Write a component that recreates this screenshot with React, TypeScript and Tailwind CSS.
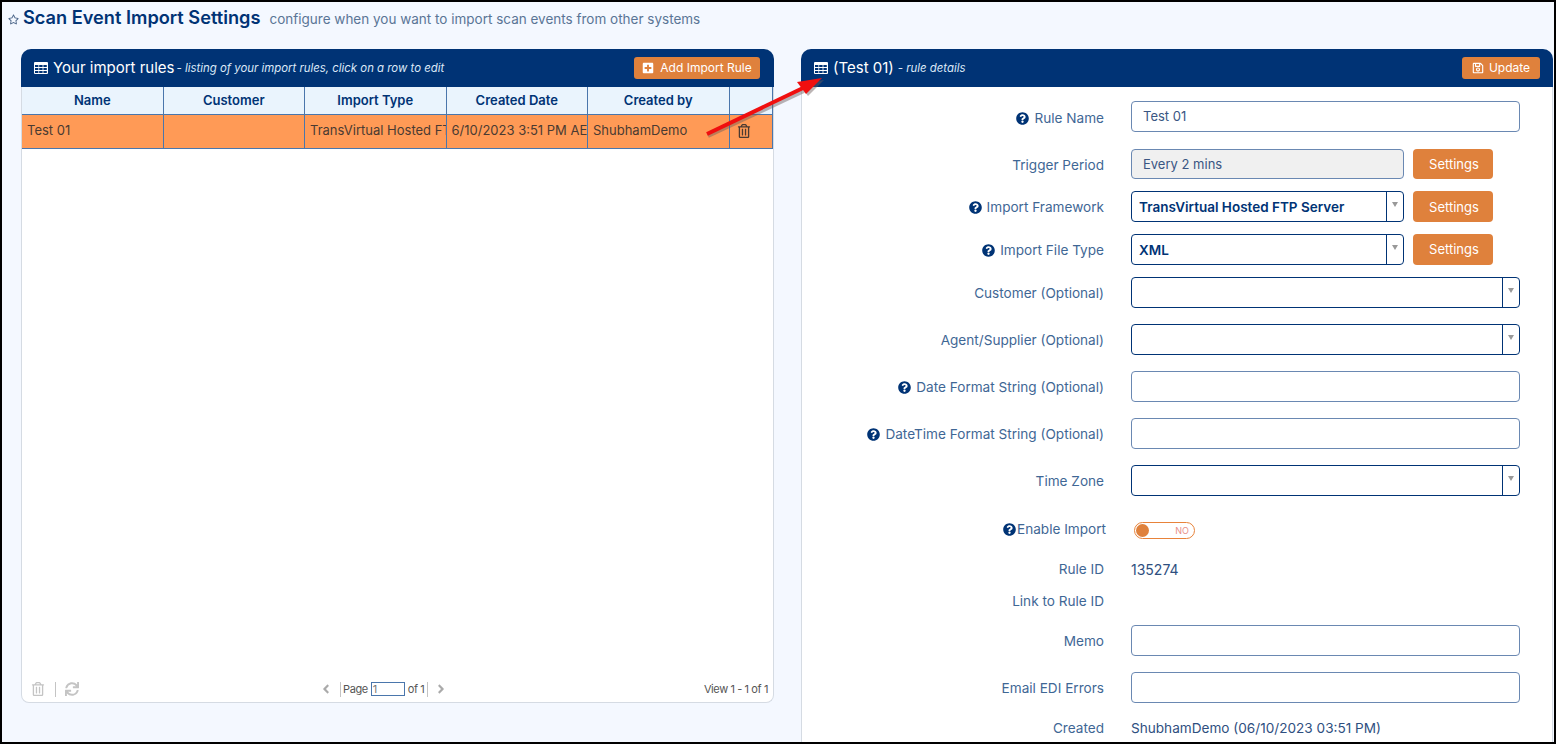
import React from "react";
import { FaRegStar, FaRegTrashAlt, FaSync, FaPlusSquare, FaRegSave, FaQuestionCircle, FaAngleLeft, FaAngleRight } from "react-icons/fa";

function TableIcon() {
  const cells: [number, number][] = [];
  for (let r = 0; r < 3; r++) for (let c = 0; c < 3; c++) cells.push([c, r]);
  return (
    <svg width="14" height="12" viewBox="0 0 14 12" className="shrink-0">
      <rect x="0" y="0" width="14" height="12" rx="1" fill="#ffffff" />
      {cells.map(([c, r]) => (
        <rect key={`${c}-${r}`} x={1 + c * 4.2} y={3 + r * 3} width="3.4" height="2" fill="#003375" />
      ))}
    </svg>
  );
}

function Label({ children, help, tight, offset = 2 }: { children: React.ReactNode; help?: boolean; tight?: boolean; offset?: number }) {
  return (
    <div className="w-[302px] flex items-center justify-end text-[13.6px] text-[#3f6795] shrink-0" style={{ marginTop: offset }}>
      {help && <FaQuestionCircle className={`text-[#003375] text-[13px] ${tight ? "mr-[1px]" : "mr-[5px]"}`} />}
      <span className={tight ? "-mr-[2px]" : ""}>{children}</span>
    </div>
  );
}

function Row({ h, mt, label, help, tight, offset, children }: { h: number; mt: number; label: string; help?: boolean; tight?: boolean; offset?: number; children?: React.ReactNode }) {
  return (
    <div className="flex items-center" style={{ height: h, marginTop: mt }}>
      <Label help={help} tight={tight} offset={offset}>{label}</Label>
      <div className="ml-[27px] flex items-center gap-[9px]">{children}</div>
    </div>
  );
}

function Input({ value, disabled, w = 389, h = 31 }: { value?: string; disabled?: boolean; w?: number; h?: number }) {
  return (
    <div
      className={`border border-[#6a88b2] rounded-[4px] pl-[11px] flex items-center text-[13px] text-[#3a5683] ${disabled ? "bg-[#f0f0f0] pt-[2px]" : "bg-white"}`}
      style={{ width: w, height: h }}
    >
      {value}
    </div>
  );
}

function Select({ value, w = 389 }: { value?: string; w?: number }) {
  return (
    <div className="h-[31px] border border-[#003375] rounded-[4px] bg-white flex" style={{ width: w }}>
      <div className="flex-1 flex items-center pl-[7px] pt-[2px] text-[13.5px] font-semibold text-[#003375]">{value}</div>
      <div className="w-[17px] border-l border-[#003375] flex justify-center pt-[10px]">
        <div className="w-0 h-0 border-l-[3px] border-r-[3px] border-t-[5px] border-l-transparent border-r-transparent border-t-[#999999]" />
      </div>
    </div>
  );
}

function SettingsBtn({ h = 31, low }: { h?: number; low?: boolean }) {
  return (
    <div className={`w-[80px] rounded-[4px] bg-[#df813c] text-white text-[13px] flex items-center justify-center pl-[2px] ${low ? "pt-[2px]" : ""}`} style={{ height: h }}>
      Settings
    </div>
  );
}

const cols = ["Name", "Customer", "Import Type", "Created Date", "Created by", ""];
const cells = ["Test 01", "", "TransVirtual Hosted FTP Server", "6/10/2023 3:51 PM AEST", "ShubhamDemo"];

export default function App() {
  return (
    <div className="relative w-[1556px] h-[744px] overflow-hidden border-2 border-black bg-[#f4f8ff] font-['Inter',sans-serif]">
      <div className="h-[47px] flex items-start pt-[4px] pl-[6px]">
        <FaRegStar className="text-[#4a6488] text-[11px] mt-[8px]" />
        <span className="ml-[4px] text-[18.2px] leading-[22px] font-semibold text-[#003375]">Scan Event Import Settings</span>
        <span className="ml-[9px] mt-[3px] text-[13.5px] leading-[20px] text-[#5a7596]">configure when you want to import scan events from other systems</span>
      </div>

      <div className="flex items-start pl-[19px]">
        {/* left panel */}
        <div className="w-[753px] h-[654px] rounded-t-[10px] rounded-b-[8px] flex flex-col bg-white border-b border-x border-[#d5dbe3] border-t-0">
          <div className="h-[38px] -mx-px shrink-0 rounded-t-[10px] bg-[#003375] flex items-center pl-[13px] pr-[14px] text-white">
            <TableIcon />
            <span className="ml-[5px] text-[15px]">Your import rules</span>
            <span className="ml-[2px] mt-[2px] text-[11.4px] italic text-[#dce8f7]">- listing of your import rules, click on a row to edit</span>
            <div className="ml-auto h-[22px] w-[126px] rounded-[3px] bg-[#df813c] flex items-center justify-center gap-[6px] text-[12px]">
              <FaPlusSquare className="text-[12px]" />
              <span>Add Import Rule</span>
            </div>
          </div>
          <div className="flex h-[28px] shrink-0 bg-[#eaf4fd] border-b border-[#4a76ac]">
            {cols.map((c, i) => (
              <div
                key={i}
                className={`flex items-center justify-center text-[13px] font-semibold text-[#003375] ${i < 5 ? "w-[141.5px] border-r border-[#4a76ac]" : "flex-1 border-r border-[#4a76ac]"}`}
              >
                {c}
              </div>
            ))}
          </div>
          <div className="flex h-[34px] shrink-0 bg-[#ff9a56] border-b border-[#4a76ac]">
            {cells.map((c, i) => (
              <div key={i} className="w-[141.5px] border-r border-[#4a76ac] flex items-center overflow-hidden whitespace-nowrap pl-[5px] pb-[2px] text-[13px] text-[#4a3a32]">
                {c}
              </div>
            ))}
            <div className="flex-1 border-r border-[#4a76ac] flex items-center pl-[7px] pb-[2px] text-[#4a3a32] text-[14px]">
              <FaRegTrashAlt />
            </div>
          </div>
          <div className="flex-1" />
          <div className="h-[28px] shrink-0 grid grid-cols-[288px_auto_1fr] items-center pl-[9px] pr-[5px] pt-[2px] text-[11px] tracking-[-0.4px] text-[#555555]">
            <div className="flex items-center text-[#c4c4c4] text-[14px]">
              <FaRegTrashAlt />
              <div className="ml-[10px] mr-[9px] w-px h-[15px] bg-[#c4c4c4]" />
              <FaSync />
            </div>
            <div className="flex items-center">
              <FaAngleLeft className="text-[#aaaaaa] text-[14px] mr-[7px]" />
              <div className="w-px h-[15px] bg-[#c4c4c4]" />
              <span className="ml-[2px]">Page</span>
              <div className="ml-[3px] w-[34px] h-[14px] border border-[#4a76ac] pl-[1px] leading-[12px] text-[#777777]">1</div>
              <span className="ml-[3px]">of 1</span>
              <div className="ml-[3px] w-px h-[15px] bg-[#c4c4c4]" />
              <FaAngleRight className="text-[#aaaaaa] text-[14px] ml-[6px]" />
            </div>
            <div className="text-right">View 1 - 1 of 1</div>
          </div>
        </div>

        {/* right panel */}
        <div className="ml-[27px] w-[752px] h-[760px] shrink-0 rounded-t-[10px] bg-white border-x border-[#d5dbe3]">
          <div className="h-[38px] -mx-px rounded-t-[10px] bg-[#003375] flex items-center pl-[13px] pr-[13px] text-white">
            <TableIcon />
            <span className="ml-[5px] text-[15px]">(Test 01)</span>
            <span className="ml-[4px] mt-[2px] text-[11.4px] italic text-[#dce8f7]">- rule details</span>
            <div className="ml-auto h-[22px] w-[78px] rounded-[3px] bg-[#df813c] flex items-center justify-center gap-[5px] text-[12px]">
              <FaRegSave className="text-[12px]" />
              <span>Update</span>
            </div>
          </div>
          <Row h={31} mt={14} label="Rule Name" help offset={4}><Input value="Test 01" /></Row>
          <Row h={30} mt={17} label="Trigger Period"><Input value="Every 2 mins" disabled w={273} h={30} /><SettingsBtn h={30} low /></Row>
          <Row h={31} mt={12} label="Import Framework" help><Select value="TransVirtual Hosted FTP Server" w={273} /><SettingsBtn low /></Row>
          <Row h={31} mt={12} label="Import File Type" help><Select value="XML" w={273} /><SettingsBtn /></Row>
          <Row h={31} mt={12} label="Customer (Optional)"><Select /></Row>
          <Row h={31} mt={16} label="Agent/Supplier (Optional)"><Select /></Row>
          <Row h={31} mt={16} label="Date Format String (Optional)" help><Input /></Row>
          <Row h={31} mt={16} label="DateTime Format String (Optional)" help><Input /></Row>
          <Row h={31} mt={16} label="Time Zone"><Select /></Row>
          <Row h={18} mt={23} label="Enable Import" help tight>
            <div className="ml-[3px] mt-[4px] relative w-[61px] h-[17px] rounded-full border border-[#e8833a] bg-white">
              <div className="absolute left-[1px] top-[1px] w-[13px] h-[13px] rounded-full bg-[#df813c]" />
              <span className="absolute right-[5px] top-0 text-[9px] leading-[15px] text-[#e8908a]">NO</span>
            </div>
          </Row>
          <Row h={20} mt={21} label="Rule ID"><span className="text-[14px] mt-[2px] text-[#2f4f7f]">135274</span></Row>
          <Row h={20} mt={12} label="Link to Rule ID" />
          <Row h={31} mt={15} label="Memo"><Input /></Row>
          <Row h={31} mt={16} label="Email EDI Errors"><Input /></Row>
          <Row h={20} mt={14} label="Created"><span className="text-[13.6px] mt-[2px] text-[#2f4f7f]">ShubhamDemo (06/10/2023 03:51 PM)</span></Row>
        </div>
      </div>

      {/* annotation arrow */}
      <svg className="absolute left-[-2px] top-[-2px] pointer-events-none" width="1556" height="744">
        <line x1="708" y1="136" x2="804" y2="91" stroke="#6a5a5a" strokeOpacity="0.45" strokeWidth="4" />
        <polygon points="824,80 799,84 808,96" fill="#6a5a5a" fillOpacity="0.45" />
        <line x1="707" y1="134" x2="803" y2="88" stroke="#f00f0f" strokeWidth="4" />
        <polygon points="822,78 797,82 806,94" fill="#f00f0f" />
      </svg>
    </div>
  );
}
